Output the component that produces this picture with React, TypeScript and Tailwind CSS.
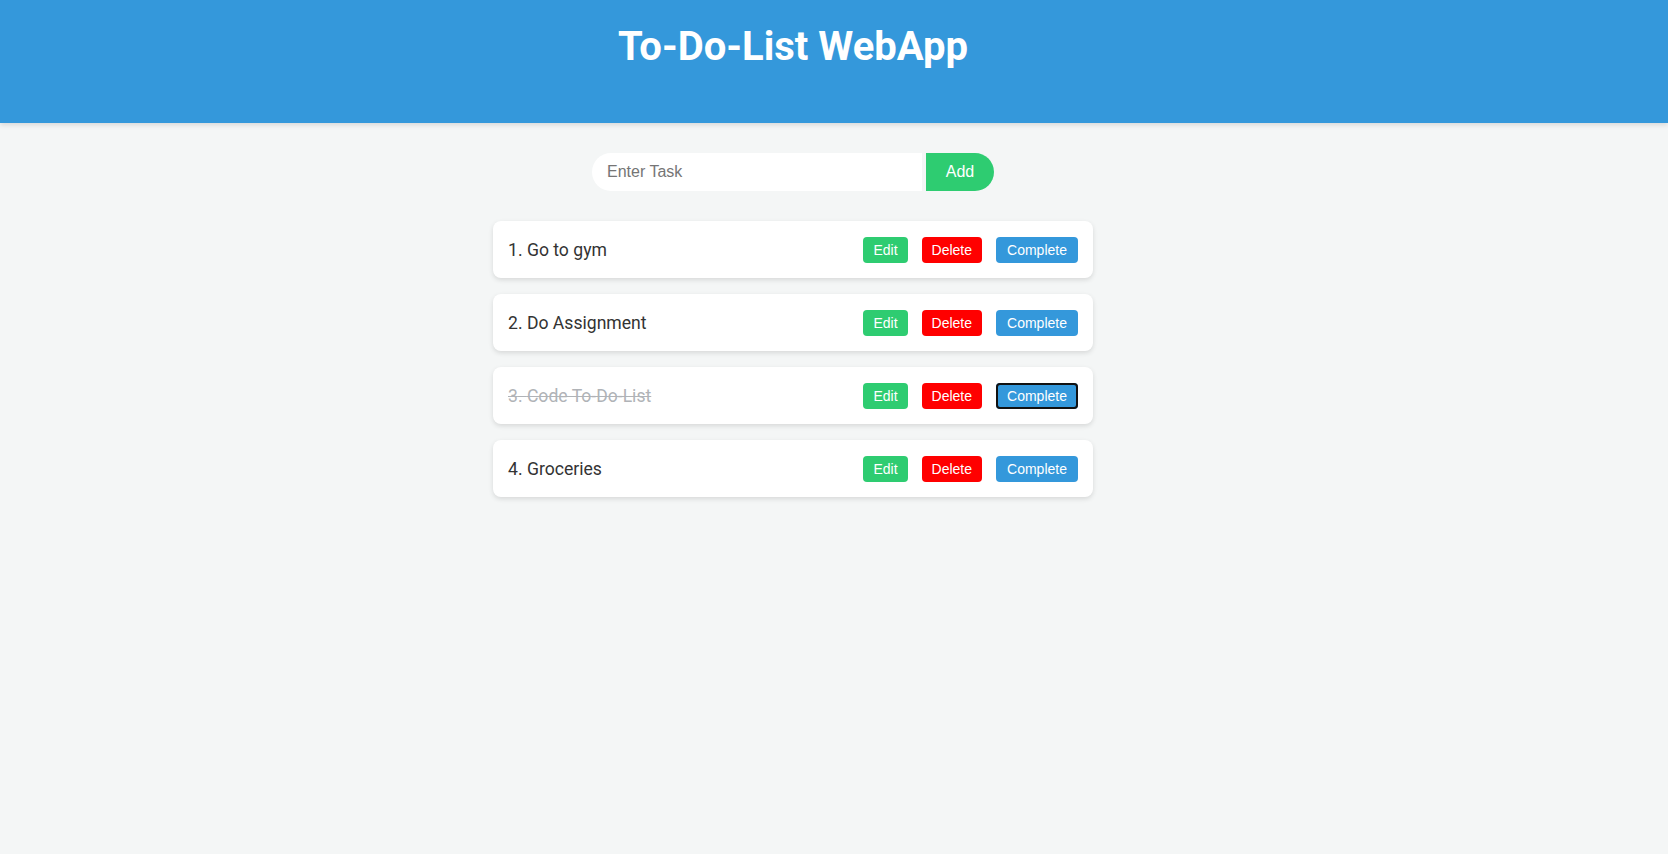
const tasks = [
  { id: 1, text: "Go to gym", done: false },
  { id: 2, text: "Do Assignment", done: false },
  { id: 3, text: "Code To-Do-List", done: true },
  { id: 4, text: "Groceries", done: false },
];

function TaskItem({ index, text, done }: { index: number; text: string; done: boolean }) {
  return (
    <li className="flex h-[57px] items-center justify-between rounded-lg bg-white pl-[15px] pr-[15px] shadow-[0_2px_5px_rgba(0,0,0,0.12)]">
      <span
        className={
          done
            ? "text-[17.6px] leading-[normal] text-[#b0b3b7] line-through font-['Roboto',sans-serif]"
            : "text-[17.6px] leading-[normal] text-[#333] font-['Roboto',sans-serif]"
        }
      >
        {index}. {text}
      </span>
      <div className="flex items-center gap-[14px] font-['Liberation_Sans',Arial,sans-serif] text-[14px] leading-4 text-white">
        <button className="h-[26px] rounded bg-[#2ecc71] px-[10px]">Edit</button>
        <button className="h-[26px] rounded bg-[#ff0000] px-[10px]">Delete</button>
        <button
          className={
            done
              ? "h-[26px] w-[82px] rounded bg-[#3498db] shadow-[inset_0_0_0_2px_#111]"
              : "h-[26px] w-[82px] rounded bg-[#3498db]"
          }
        >
          Complete
        </button>
      </div>
    </li>
  );
}

export default function App() {
  return (
    <div className="min-h-screen bg-[#f4f6f6]">
      <header className="h-[123px] bg-[#3498db] shadow-[0_2px_5px_rgba(0,0,0,0.12)]">
        <div className="w-[1586px] pt-[23px] text-center">
          <h1 className="text-[40px] font-bold leading-[normal] text-white font-['Roboto',sans-serif]">
            To-Do-List WebApp
          </h1>
        </div>
      </header>

      <main className="w-[1586px] pt-[30px]">
        <div className="flex justify-center gap-1 font-['Liberation_Sans',Arial,sans-serif] text-[16px]">
          <input
            type="text"
            placeholder="Enter Task"
            className="h-[38px] w-[330px] rounded-l-full bg-white px-[15px] text-[#333] placeholder:text-[#757575] outline-none"
          />
          <button className="h-[38px] w-[68px] rounded-r-full bg-[#2ecc71] text-white">Add</button>
        </div>

        <ul className="mx-auto mt-[30px] flex w-[600px] flex-col gap-4">
          {tasks.map((t, i) => (
            <TaskItem key={t.id} index={i + 1} text={t.text} done={t.done} />
          ))}
        </ul>
      </main>
    </div>
  );
}
